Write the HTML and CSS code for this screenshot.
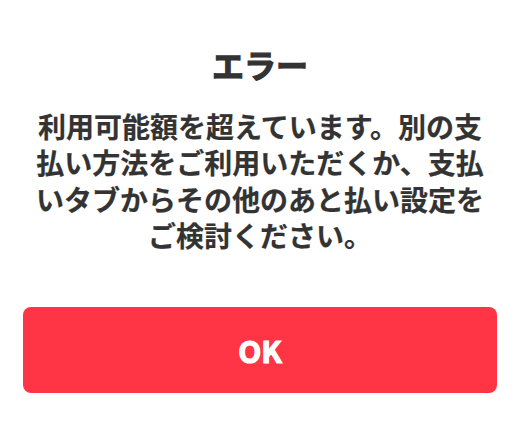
FILE: index.html
```html
<!DOCTYPE html>
<html lang="ja">
<head>
<meta charset="utf-8">
<link rel="stylesheet" href="styles.css">
</head>
<body>
<div class="dialog">
  <h1 class="title">エラー</h1>
  <p class="message">利用可能額を超えています。別の支<br>払い方法をご利用いただくか、支払<br>いタブからその他のあと払い設定を<br>ご検討ください。</p>
  <button class="ok">OK</button>
</div>
</body>
</html>
```
FILE: styles.css
```css
html, body {
  margin: 0;
  padding: 0;
  background: #ffffff;
}
.dialog {
  box-sizing: border-box;
  width: 525px;
  padding: 44px 28px 0 23px;
  display: flex;
  flex-direction: column;
  align-items: stretch;
  font-family: "Noto Sans CJK JP", "Noto Sans", sans-serif;
  color: #333333;
}
.title {
  margin: 0;
  font-size: 32px;
  line-height: 40px;
  font-weight: 700;
  text-align: center;
  -webkit-text-stroke: 1.2px #333333;
}
.message {
  margin: 24px 0 0 0;
  font-size: 28px;
  line-height: 36.4px;
  font-weight: 700;
  text-align: center;
  white-space: nowrap;
  -webkit-text-stroke: 0.2px #333333;
}
.ok {
  margin-top: 53px;
  height: 86px;
  border: none;
  border-radius: 8px;
  background: #ff3445;
  color: #ffffff;
  font-family: "Noto Sans CJK JP", "Noto Sans", sans-serif;
  font-size: 30px;
  font-weight: 700;
  padding: 0;
  -webkit-text-stroke: 1.2px #ffffff;
}
```
